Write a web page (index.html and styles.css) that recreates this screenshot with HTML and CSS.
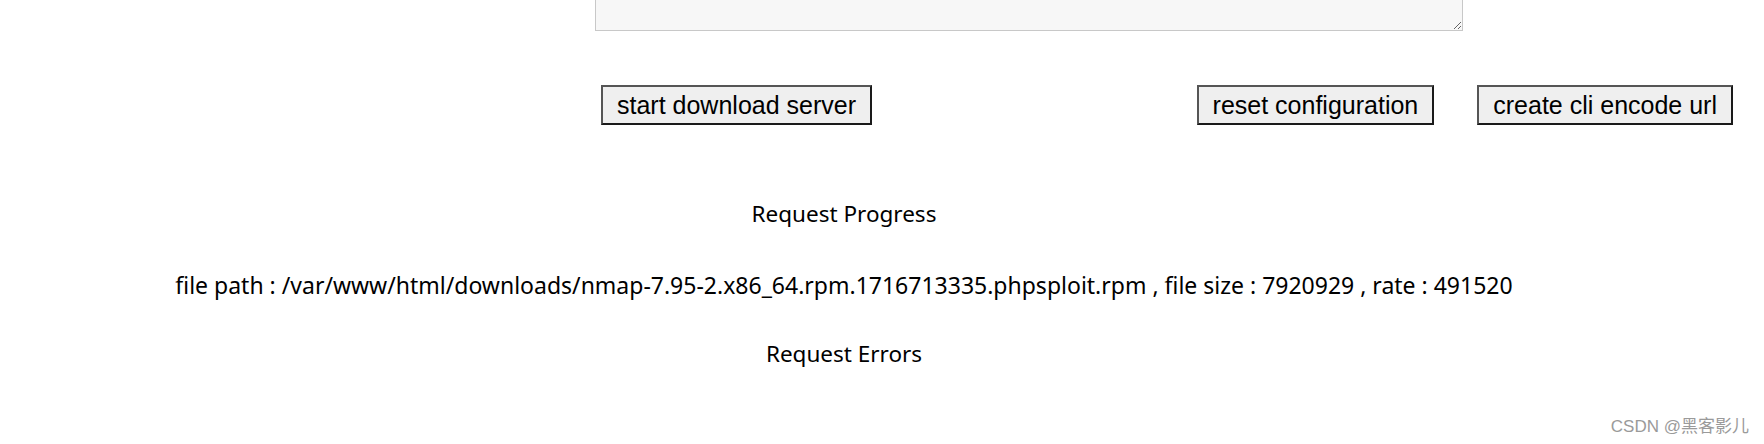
FILE: index.html
```html
<!DOCTYPE html>
<html lang="en">
<head>
<meta charset="utf-8">
<title>Download server</title>
<link rel="stylesheet" href="styles.css">
</head>
<body>
<div class="page">
  <div class="editor-row">
    <textarea class="config-box"></textarea>
  </div>
  <div class="actions">
    <button class="btn">start download server</button>
    <div class="actions-right">
      <button class="btn">reset configuration</button>
      <button class="btn">create cli encode url</button>
    </div>
  </div>
  <div class="report">
    <div class="report-title progress-title">Request Progress</div>
    <div class="report-line">file path : /var/www/html/downloads/nmap-7.95-2.x86_64.rpm.1716713335.phpsploit.rpm , file size : 7920929 , rate : 491520</div>
    <div class="report-title errors-title">Request Errors</div>
  </div>
</div>
<div class="watermark">CSDN @黑客影儿</div>
</body>
</html>
```
FILE: styles.css
```css
html, body {
  margin: 0;
  padding: 0;
  background: #ffffff;
}
body {
  width: 1764px;
  height: 444px;
  overflow: hidden;
  position: relative;
  font-family: "Noto Sans", "Open Sans", sans-serif;
  color: #000;
}
.editor-row {
  padding-left: 595px;
  display: flex;
}
.config-box {
  box-sizing: border-box;
  width: 868px;
  height: 31px;
  margin: 0;
  background: #f7f7f7;
  border: 1px solid #c8c8c8;
  border-top: none;
  resize: both;
  display: block;
}
.actions {
  display: flex;
  justify-content: space-between;
  align-items: flex-start;
  padding: 0 31px 0 601px;
  margin-top: 54px;
}
.actions-right {
  display: flex;
  gap: 43px;
}
.btn {
  box-sizing: border-box;
  height: 40px;
  padding: 0 14px;
  margin: 0;
  font-family: "Liberation Sans", Arial, sans-serif;
  font-size: 25px;
  color: #000;
  background: #efefef;
  border: 2px solid;
  border-color: #555 #1a1a1a #1a1a1a #555;
  border-radius: 0;
}
.report {
  width: 1688px;
  text-align: center;
}
.report-title,
.report-line {
  line-height: 32px;
  font-size: 23px;
}
.report-title {
  font-size: 22.5px;
}
.progress-title {
  margin-top: 73px;
}
.report-line {
  margin-top: 39px;
}
.errors-title {
  margin-top: 37px;
}
.watermark {
  position: absolute;
  right: 15px;
  bottom: 7px;
  font-family: "Liberation Sans", "Noto Sans CJK SC", sans-serif;
  font-size: 17px;
  color: #9a9a9a;
  text-shadow: 0 0 2px #fff;
}
```
